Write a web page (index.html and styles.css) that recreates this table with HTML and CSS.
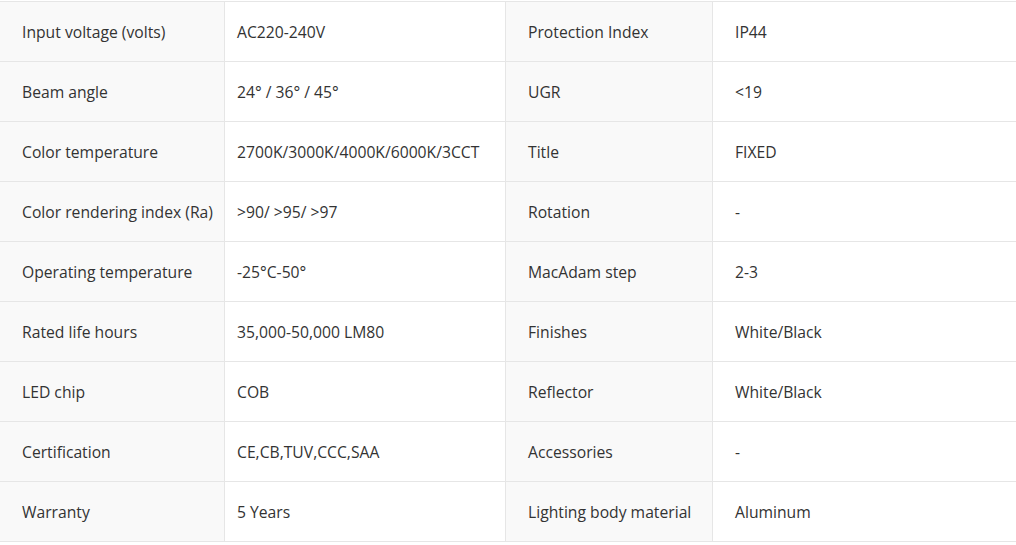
FILE: index.html
```html
<!DOCTYPE html>
<html lang="en">
<head>
<meta charset="utf-8">
<title>Specifications</title>
<link rel="stylesheet" href="styles.css">
</head>
<body>
<table class="spec">
  <colgroup>
    <col class="c1"><col class="c2"><col class="c3"><col class="c4">
  </colgroup>
  <tbody>
    <tr><td class="label">Input voltage (volts)</td><td class="val">AC220-240V</td><td class="label">Protection Index</td><td class="val val2">IP44</td></tr>
    <tr><td class="label">Beam angle</td><td class="val">24° / 36° / 45°</td><td class="label">UGR</td><td class="val val2">&lt;19</td></tr>
    <tr><td class="label">Color temperature</td><td class="val">2700K/3000K/4000K/6000K/3CCT</td><td class="label">Title</td><td class="val val2">FIXED</td></tr>
    <tr><td class="label">Color rendering index (Ra)</td><td class="val">&gt;90/ &gt;95/ &gt;97</td><td class="label">Rotation</td><td class="val val2">-</td></tr>
    <tr><td class="label">Operating temperature</td><td class="val">-25°C-50°</td><td class="label">MacAdam step</td><td class="val val2">2-3</td></tr>
    <tr><td class="label">Rated life hours</td><td class="val">35,000-50,000 LM80</td><td class="label">Finishes</td><td class="val val2">White/Black</td></tr>
    <tr><td class="label">LED chip</td><td class="val">COB</td><td class="label">Reflector</td><td class="val val2">White/Black</td></tr>
    <tr><td class="label">Certification</td><td class="val">CE,CB,TUV,CCC,SAA</td><td class="label">Accessories</td><td class="val val2">-</td></tr>
    <tr><td class="label">Warranty</td><td class="val">5 Years</td><td class="label">Lighting body material</td><td class="val val2">Aluminum</td></tr>
  </tbody>
</table>
</body>
</html>
```
FILE: styles.css
```css
html, body {
  margin: 0;
  padding: 0;
  background: #ffffff;
}
body {
  padding-top: 1px;
  overflow: hidden;
  font-family: "Open Sans", "Noto Sans", sans-serif;
  font-size: 15.7px;
  color: #333333;
}
.spec {
  border-collapse: collapse;
  table-layout: fixed;
  width: 1030px;
  margin-left: -1px;
}
.c1 { width: 225px; }
.c2 { width: 281px; }
.c3 { width: 207px; }
.c4 { width: 317px; }
.spec td {
  height: 58px;
  border: 1px solid #e6e6e6;
  padding: 1px 0 0 0;
  vertical-align: middle;
  white-space: nowrap;
  line-height: 20px;
}
.label {
  background: #f9f9f9;
  padding-left: 22px !important;
}
.val {
  padding-left: 12px !important;
}
.val2 {
  padding-left: 22px !important;
}
```
